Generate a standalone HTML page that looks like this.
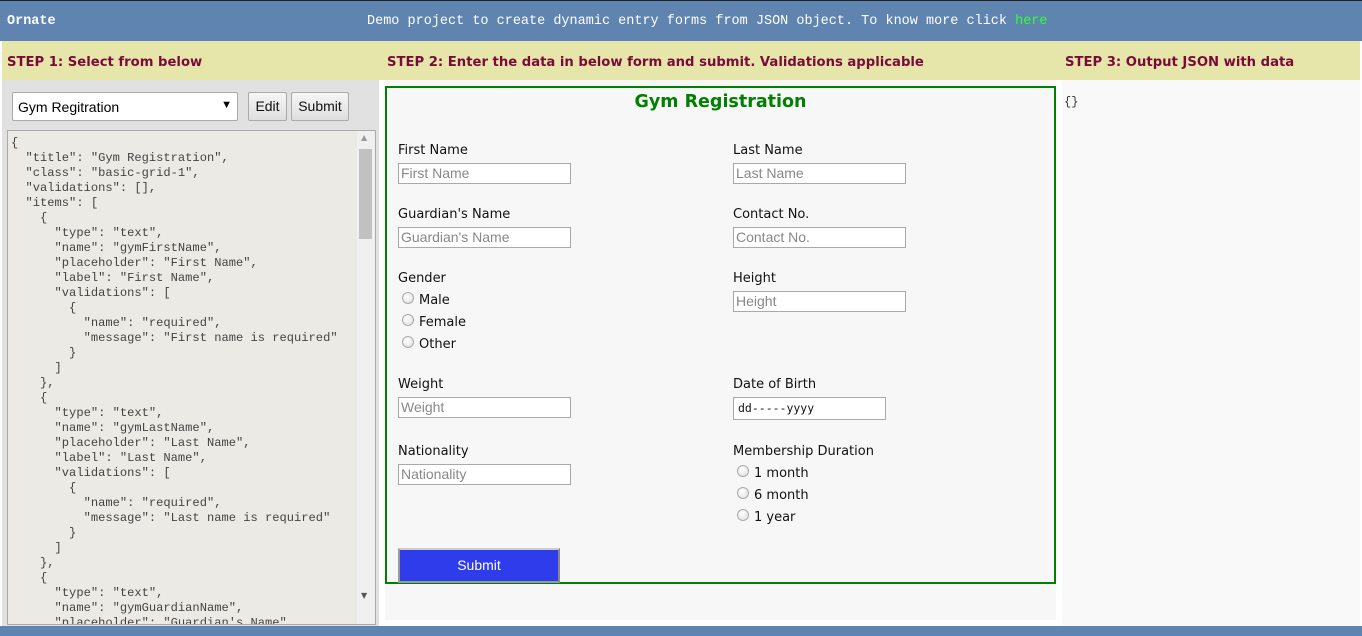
<!DOCTYPE html>
<html><head><meta charset="utf-8"><style>
*{box-sizing:border-box;margin:0;padding:0}
body{width:1362px;height:636px;overflow:hidden;background:#fff;font-family:"DejaVu Sans",sans-serif;position:relative}
.a{position:absolute}
#hdr{left:0;top:0;width:1362px;height:41px;background:#5f84b0;border-top:1px solid #222}
#hdr .t{color:#fff;font-family:"Liberation Mono",monospace;font-size:13.5px;top:13px}
#steps{left:2px;top:41px;width:1358px;height:39px;background:#e6e6aa}
.st{color:#7a0a3a;font-weight:bold;font-size:13.2px;top:14px}
#left{left:2px;top:80px;width:377px;height:546px;background:#e1e1e1}
#mid{left:385px;top:80px;width:671px;height:540px;background:#f7f7f7}
#right{left:1062px;top:80px;width:298px;height:546px;background:#f9f9f9}
select,.btn{font-family:"Liberation Sans",sans-serif;font-size:14px}
.btn{border:1px solid #aaa;border-radius:2px;background:linear-gradient(#f6f6f6,#dedede);height:29px;top:92px;text-align:center;line-height:27px;color:#111}
#ta{left:7px;top:130px;width:369px;height:495px;background:#ebeae4;border:1px solid #aaa;overflow:hidden}
#ta pre{font-family:"Liberation Mono",monospace;font-size:12.1px;line-height:15px;color:#444;position:absolute;left:3px;top:5px}
#sb{left:349px;top:0;width:18px;height:493px;background:#f0f0f0}
#form{left:385px;top:86px;width:671px;height:498px;border:2px solid #008000}
.lb{font-size:13px;color:#111}
.in{width:173px;height:21px;border:1px solid #a9a9a9;background:#fff;font-family:"Liberation Sans",sans-serif;font-size:14px;color:#888;padding-left:2px;line-height:19px}
.rd{width:12px;height:12px;border-radius:50%;border:1px solid #aaa;background:radial-gradient(circle at 40% 35%,#fff,#ddd)}
</style></head><body>
<div id="hdr" class="a">
<div class="a t" style="left:7px;font-weight:bold">Ornate</div>
<div class="a t" style="left:367px">Demo project to create dynamic entry forms from JSON object. To know more click <span style="color:#3f3">here</span></div>
</div>
<div id="steps" class="a">
<div class="a st" style="left:5px">STEP 1: Select from below</div>
<div class="a st" style="left:385px">STEP 2: Enter the data in below form and submit. Validations applicable</div>
<div class="a st" style="left:1063px">STEP 3: Output JSON with data</div>
</div>
<div id="left" class="a"></div>
<div class="a" style="left:12px;top:92px;width:226px;height:29px;background:#fff;border:1px solid #aaa;border-radius:2px;font-family:'Liberation Sans',sans-serif;font-size:14px;padding:6px 0 0 5px">Gym Regitration<span class="a" style="right:5px;top:6px;font-size:11px">▼</span></div>
<div class="a btn" style="left:248px;width:39px">Edit</div>
<div class="a btn" style="left:291px;width:58px">Submit</div>
<div id="ta" class="a"><pre>{
  "title": "Gym Registration",
  "class": "basic-grid-1",
  "validations": [],
  "items": [
    {
      "type": "text",
      "name": "gymFirstName",
      "placeholder": "First Name",
      "label": "First Name",
      "validations": [
        {
          "name": "required",
          "message": "First name is required"
        }
      ]
    },
    {
      "type": "text",
      "name": "gymLastName",
      "placeholder": "Last Name",
      "label": "Last Name",
      "validations": [
        {
          "name": "required",
          "message": "Last name is required"
        }
      ]
    },
    {
      "type": "text",
      "name": "gymGuardianName",
      "placeholder": "Guardian's Name"</pre>
<div id="sb" class="a"><div class="a" style="left:2px;top:18px;width:13px;height:90px;background:#c1c1c1"></div><div class="a" style="left:4px;top:2px;font-size:8px;color:#999">▲</div><div class="a" style="left:4px;top:460px;font-size:8px;color:#555">▼</div></div>
</div>
<div id="mid" class="a"></div>
<div id="right" class="a"><div class="a" style="left:2px;top:15px;font-family:'Liberation Mono',monospace;font-size:12px;color:#333">{}</div></div>
<div id="form" class="a">
<div class="a" style="left:0;width:667px;top:4px;text-align:center;color:#008000;font-weight:bold;font-size:17.5px">Gym Registration</div>
<div class="a lb" style="left:11px;top:55px">First Name</div><div class="a in" style="left:11px;top:75px">First Name</div>
<div class="a lb" style="left:346px;top:55px">Last Name</div><div class="a in" style="left:346px;top:75px">Last Name</div>
<div class="a lb" style="left:11px;top:119px">Guardian's Name</div><div class="a in" style="left:11px;top:139px">Guardian's Name</div>
<div class="a lb" style="left:346px;top:119px">Contact No.</div><div class="a in" style="left:346px;top:139px">Contact No.</div>
<div class="a lb" style="left:11px;top:183px">Gender</div>
<div class="a rd" style="left:15px;top:204px"></div><div class="a lb" style="left:32px;top:205px">Male</div>
<div class="a rd" style="left:15px;top:226px"></div><div class="a lb" style="left:32px;top:227px">Female</div>
<div class="a rd" style="left:15px;top:248px"></div><div class="a lb" style="left:32px;top:249px">Other</div>
<div class="a lb" style="left:346px;top:183px">Height</div><div class="a in" style="left:346px;top:203px">Height</div>
<div class="a lb" style="left:11px;top:289px">Weight</div><div class="a in" style="left:11px;top:309px">Weight</div>
<div class="a lb" style="left:346px;top:289px">Date of Birth</div><div class="a in" style="left:346px;top:309px;width:153px;height:23px;color:#111;font-family:'DejaVu Sans Mono',monospace;font-size:11.5px;padding-left:4px;line-height:21px">dd-----yyyy</div>
<div class="a lb" style="left:11px;top:356px">Nationality</div><div class="a in" style="left:11px;top:376px">Nationality</div>
<div class="a lb" style="left:346px;top:356px">Membership Duration</div>
<div class="a rd" style="left:350px;top:377px"></div><div class="a lb" style="left:367px;top:378px">1 month</div>
<div class="a rd" style="left:350px;top:399px"></div><div class="a lb" style="left:367px;top:400px">6 month</div>
<div class="a rd" style="left:350px;top:421px"></div><div class="a lb" style="left:367px;top:422px">1 year</div>
<div class="a" style="left:11px;top:460px;width:162px;height:35px;background:#2f3ceb;border:2px solid #999;border-right-color:#888;border-top-color:#ccc;color:#fff;font-family:'Liberation Sans',sans-serif;font-size:14px;text-align:center;line-height:31px">Submit</div>
</div>
<div class="a" style="left:0;top:626px;width:1362px;height:10px;background:#5f84b0"></div>
</body></html>
